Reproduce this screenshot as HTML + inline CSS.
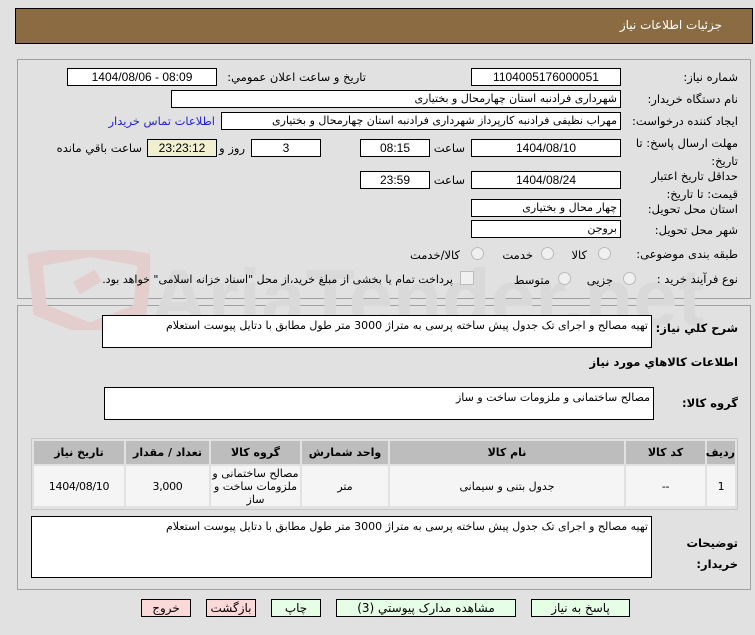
<!DOCTYPE html>
<html><head><meta charset="utf-8">
<style>
body{margin:0;width:755px;height:635px;background:#e1e1e1;font-family:"DejaVu Sans","Liberation Sans",sans-serif;font-size:11px;color:#000;position:relative;overflow:hidden}
.a{position:absolute}
.box{position:absolute;background:#fff;border:1px solid #000;box-sizing:border-box;height:18px;line-height:16px;text-align:center;font-size:12px;font-family:"Liberation Sans","DejaVu Sans",sans-serif;overflow:hidden;white-space:nowrap}
.r{direction:rtl;text-align:right;padding-right:3px;font-family:"DejaVu Sans",sans-serif;font-size:11px;letter-spacing:-0.3px}
.l{position:absolute;direction:rtl;white-space:nowrap;font-size:11.5px;letter-spacing:-0.3px}
.panel{position:absolute;left:17px;width:734px;border:1px solid #a0a0a0;box-sizing:border-box}
.ta{position:absolute;background:#fff;border:1px solid #000;box-sizing:border-box;direction:rtl;text-align:right;padding:3px 3px;font-size:11px;letter-spacing:-0.3px;white-space:nowrap;overflow:hidden}
.rad{position:absolute;width:11px;height:11px;border-radius:50%;border:1px solid #bbb;background:#f0f0f0}
table{border-collapse:separate;border-spacing:2px;table-layout:fixed}
td,th{text-align:center;font-size:11px;letter-spacing:-0.3px;padding:0}
th{background:#bdbdbd;height:23px}
td{background:#f5f5f5;height:40px}
.btn{position:absolute;top:599px;height:18px;border:1px solid #000;box-sizing:border-box;text-align:center;line-height:16px;font-size:12px;direction:rtl}
</style></head><body>
<div class="a" style="left:15px;top:8px;width:738px;height:36px;background:#8b6c42;border:1px solid #000;box-sizing:border-box"></div>
<div class="l" style="right:33px;top:18px;color:#fff;font-size:12px">جزئيات اطلاعات نياز</div>

<div class="panel" style="top:59px;height:240px"></div>
<div class="panel" style="top:305px;height:285px"></div>

<!-- watermark -->
<svg class="a" style="left:20px;top:250px" width="130" height="80"><path d="M15 10 L70 0 L125 10 L120 60 L70 80 L20 60Z" fill="none" stroke="#e4cdcd" stroke-width="14"/><rect x="55" y="25" width="25" height="14" fill="#e4cdcd" transform="rotate(-30 67 32)"/></svg>
<div class="a" style="left:150px;top:252px;font-size:80px;font-weight:bold;color:#d9d9d9;white-space:nowrap;font-family:'Liberation Sans',sans-serif">AriaTender.net</div>

<div class="l" style="right:17px;top:70px">شماره نیاز:</div>
<div class="box" style="left:471px;top:68px;width:150px">1104005176000051</div>
<div class="l" style="right:389px;top:70px">تاريخ و ساعت اعلان عمومي:</div>
<div class="box" style="left:67px;top:68px;width:150px">1404/08/06 - 08:09</div>

<div class="l" style="right:17px;top:92px">نام دستگاه خریدار:</div>
<div class="box r" style="left:171px;top:90px;width:450px">شهرداری فرادنبه استان چهارمحال و بختیاری</div>

<div class="l" style="right:17px;top:114px">ایجاد کننده درخواست:</div>
<div class="box r" style="left:221px;top:112px;width:400px">مهراب نظیفی فرادنبه کارپرداز شهرداری فرادنبه استان چهارمحال و بختیاری</div>
<div class="l" style="right:540px;top:114px;color:#2222dd">اطلاعات تماس خریدار</div>

<div class="l" style="right:17px;top:134px;line-height:18px;text-align:right">مهلت ارسال پاسخ: تا<br>تاريخ:</div>
<div class="box" style="left:471px;top:139px;width:150px">1404/08/10</div>
<div class="l" style="right:290px;top:141px">ساعت</div>
<div class="box" style="left:360px;top:139px;width:70px">08:15</div>
<div class="box" style="left:251px;top:139px;width:70px">3</div>
<div class="l" style="right:510px;top:141px">روز و</div>
<div class="box" style="left:147px;top:139px;width:70px;background:#f0efd0">23:23:12</div>
<div class="l" style="right:613px;top:141px">ساعت باقي مانده</div>

<div class="l" style="right:17px;top:167px;line-height:18px">حداقل تاريخ اعتبار<br>قيمت: تا تاريخ:</div>
<div class="box" style="left:471px;top:171px;width:150px">1404/08/24</div>
<div class="l" style="right:290px;top:173px">ساعت</div>
<div class="box" style="left:360px;top:171px;width:70px">23:59</div>

<div class="l" style="right:17px;top:202px">استان محل تحویل:</div>
<div class="box r" style="left:471px;top:199px;width:150px">چهار محال و بختیاری</div>
<div class="l" style="right:17px;top:223px">شهر محل تحویل:</div>
<div class="box r" style="left:471px;top:220px;width:150px">بروجن</div>

<div class="l" style="right:17px;top:247px">طبقه بندی موضوعی:</div>
<div class="rad" style="left:598px;top:247px"></div><div class="l" style="right:168px;top:248px">کالا</div>
<div class="rad" style="left:541px;top:247px"></div><div class="l" style="right:222px;top:248px">خدمت</div>
<div class="rad" style="left:471px;top:247px"></div><div class="l" style="right:295px;top:248px">کالا/خدمت</div>

<div class="l" style="right:17px;top:272px">نوع فرآیند خرید :</div>
<div class="rad" style="left:623px;top:272px"></div><div class="l" style="right:142px;top:273px">جزیی</div>
<div class="rad" style="left:558px;top:272px"></div><div class="l" style="right:205px;top:273px">متوسط</div>
<div class="a" style="left:460px;top:271px;width:12px;height:12px;border:1px solid #bbb;background:#f0f0f0"></div>
<div class="l" style="right:302px;top:273px;font-size:11px">پرداخت تمام یا بخشی از مبلغ خرید،از محل "اسناد خزانه اسلامی" خواهد بود.</div>

<div class="l" style="right:17px;top:321px;font-weight:bold">شرح كلي نياز:</div>
<div class="ta" style="left:102px;top:315px;width:550px;height:33px">تهیه مصالح و اجرای تک جدول پیش ساخته پرسی به متراژ 3000  متر طول مطابق با دتایل پیوست استعلام</div>
<div class="l" style="right:17px;top:355px;font-weight:bold">اطلاعات كالاهاي مورد نياز</div>
<div class="l" style="right:17px;top:396px;font-weight:bold">گروه کالا:</div>
<div class="ta" style="left:104px;top:387px;width:550px;height:33px">مصالح ساختمانی و ملزومات ساخت و ساز</div>

<div class="a" style="left:31px;top:438px;width:707px;height:72px;border:1px solid #c8c8c8;box-sizing:border-box">
<table style="width:705px;direction:rtl"><tr>
<th style="width:28px">رديف</th><th style="width:79px">کد کالا</th><th style="width:234px">نام کالا</th><th style="width:86px">واحد شمارش</th><th style="width:89px">گروه کالا</th><th style="width:83px">تعداد / مقدار</th><th>تاريخ نياز</th></tr>
<tr><td>1</td><td>--</td><td>جدول بتنی و سیمانی</td><td>متر</td><td style="line-height:13px">مصالح ساختمانی و ملزومات ساخت و ساز</td><td>3,000</td><td>1404/08/10</td></tr></table></div>

<div class="l" style="right:17px;top:533px;font-weight:bold;line-height:21px">توضیحات<br>خریدار:</div>
<div class="ta" style="left:31px;top:516px;width:621px;height:62px">تهیه مصالح و اجرای تک جدول پیش ساخته پرسی به متراژ 3000  متر طول مطابق با دتایل پیوست استعلام</div>

<div class="btn" style="left:531px;width:99px;background:#e6fde6">پاسخ به نیاز</div>
<div class="btn" style="left:336px;width:180px;background:#e6fde6">مشاهده مدارک پیوستي (3)</div>
<div class="btn" style="left:271px;width:50px;background:#e6fde6">چاپ</div>
<div class="btn" style="left:206px;width:50px;background:#fcd9d9">بازگشت</div>
<div class="btn" style="left:141px;width:50px;background:#fcd9d9">خروج</div>
</body></html>
